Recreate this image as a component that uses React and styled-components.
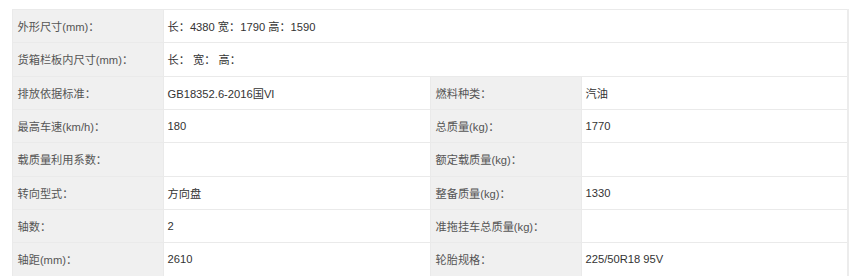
import React from 'react'
import styled, { createGlobalStyle } from 'styled-components'

const GlobalStyle = createGlobalStyle`
  html, body {
    margin: 0;
    padding: 0;
    background: #fff;
  }
  body {
    font-family: "Liberation Sans", Arial, "Noto Sans CJK SC", sans-serif;
  }
`

const Wrapper = styled.div`
  padding: 9px 5px 0 12px;
`

const Table = styled.table`
  width: 835px;
  border-collapse: collapse;
  table-layout: fixed;
  font-size: 11.2px;
  border-right: 2px solid #ececec;
`

const Row = styled.tr`
  height: 33.33px;
`

const Label = styled.td`
  background: #f0f0f0;
  color: #555;
  padding: 0 0 0 4.5px;
  border: 1px solid #eaeaea;
  white-space: nowrap;
`

const Value = styled.td`
  background: #fff;
  color: #333;
  padding: 0 0 0 3.5px;
  border: 1px solid #eaeaea;
  white-space: nowrap;
`

const rows = [
  { label: '外形尺寸(mm)：', value: '长：4380 宽：1790 高：1590' },
  { label: '货箱栏板内尺寸(mm)：', value: '长： 宽： 高：' },
  { label: '排放依据标准：', value: 'GB18352.6-2016国VI', label2: '燃料种类：', value2: '汽油' },
  { label: '最高车速(km/h)：', value: '180', label2: '总质量(kg)：', value2: '1770' },
  { label: '载质量利用系数：', value: '', label2: '额定载质量(kg)：', value2: '' },
  { label: '转向型式：', value: '方向盘', label2: '整备质量(kg)：', value2: '1330' },
  { label: '轴数：', value: '2', label2: '准拖挂车总质量(kg)：', value2: '' },
  { label: '轴距(mm)：', value: '2610', label2: '轮胎规格：', value2: '225/50R18 95V' },
]

const App = () => {
  return (
    <Wrapper>
      <GlobalStyle />
      <Table>
        <colgroup>
          <col style={{ width: 151 }} />
          <col style={{ width: 267 }} />
          <col style={{ width: 151 }} />
          <col style={{ width: 266 }} />
        </colgroup>
        <tbody>
          {rows.map((r) => (
            <Row key={r.label}>
              <Label>{r.label}</Label>
              {r.label2 === undefined ? (
                <Value colSpan={3}>{r.value}</Value>
              ) : (
                <>
                  <Value>{r.value}</Value>
                  <Label>{r.label2}</Label>
                  <Value>{r.value2}</Value>
                </>
              )}
            </Row>
          ))}
        </tbody>
      </Table>
    </Wrapper>
  )
}

export default App
